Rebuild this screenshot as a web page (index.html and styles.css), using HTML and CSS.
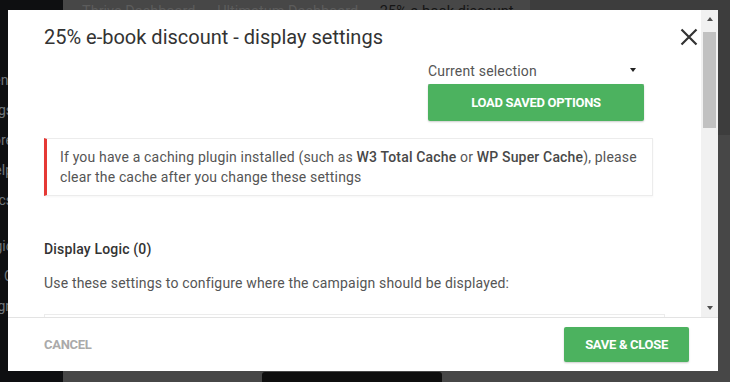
FILE: index.html
```html
<!DOCTYPE html>
<html lang="en">
<head>
    <meta charset="UTF-8">
    <meta name="viewport" content="width=device-width, initial-scale=1.0">
    <title>Display settings</title>
    <link rel="stylesheet" href="styles.css">
</head>
<body>
    <div class="admin">
        <nav class="sidebar">
            <ul class="menu">
                <li><span>Content</span></li>
                <li><span>Settings</span></li>
                <li><span>Store</span></li>
                <li><span>Help</span></li>
                <li><span>Topics</span></li>
                <li class="gap"><span>Logic</span></li>
                <li><span>Leads C</span></li>
                <li><span>Design</span></li>
            </ul>
        </nav>

        <main class="page">
            <div class="page-main">
                <div class="breadcrumbs">
                    <a href="#">Thrive Dashboard</a>
                    <span class="sep">&rarr;</span>
                    <a href="#">Ultimatum Dashboard</a>
                    <span class="sep">&rarr;</span>
                    <span class="current">25% e-book discount</span>
                </div>
                <div class="page-bottom">
                    <span class="dark-btn"></span>
                </div>
            </div>
            <aside class="page-side"></aside>
        </main>
    </div>

    <div class="modal">
        <div class="modal-body">
            <div class="modal-scroll">
                <h2 class="modal-title">25% e-book discount - display settings</h2>

                <div class="saved-options">
                    <div class="select">
                        <span>Current selection</span>
                        <span class="caret"></span>
                    </div>
                    <button class="btn btn-green btn-block">Load saved options</button>
                </div>

                <div class="notice">
                    If you have a caching plugin installed (such as <strong>W3 Total Cache</strong> or <strong>WP Super Cache</strong>), please clear the cache after you change these settings
                </div>

                <h4 class="section-title">Display Logic (0)</h4>
                <p class="section-text">Use these settings to configure where the campaign should be displayed:</p>

                <div class="rules"></div>
            </div>

            <!-- fake scrollbar, same look as the classic one -->
            <div class="scrollbar">
                <span class="arrow up"></span>
                <span class="thumb"></span>
                <span class="arrow down"></span>
            </div>
        </div>

        <div class="modal-footer">
            <a href="#" class="link-cancel">Cancel</a>
            <button class="btn btn-green">Save &amp; Close</button>
        </div>

        <button class="modal-close" aria-label="Close">
            <svg width="18" height="18" viewBox="0 0 18 18">
                <path d="M1.5 1.5 L16.5 16.5 M16.5 1.5 L1.5 16.5" stroke="#333" stroke-width="2.2" fill="none"/>
            </svg>
        </button>
    </div>
</body>
</html>
```

FILE: styles.css
```css
* {
    margin: 0;
    padding: 0;
    box-sizing: border-box;
}

body {
    font-family: Roboto, 'Liberation Sans', Arial, sans-serif;
    background: #474747;
    height: 100vh;
    overflow: hidden;
}

/* dimmed admin page behind the modal */
.admin {
    display: grid;
    grid-template-columns: 63px 1fr;
    height: 100vh;
}

.sidebar {
    background: #0e0f11;
    overflow: hidden;
}

.menu {
    list-style: none;
    padding-top: 70px;
}

.menu li {
    display: flex;
    justify-content: flex-end;
    width: 13px;
    height: 30px;
    line-height: 20px;
    font-size: 14px;
    color: #6f757a;
    white-space: nowrap;
}

.menu li.gap {
    margin-top: 16px;
}

.page {
    display: grid;
    grid-template-columns: 1fr 200px;
}

.page-main {
    display: flex;
    flex-direction: column;
}

.breadcrumbs {
    padding: 3px 0 0 19px;
    font-size: 14.5px;
    line-height: 18px;
    color: #5c5c5c;
    white-space: nowrap;
}

.breadcrumbs a {
    color: #5c5c5c;
    text-decoration: none;
}

.breadcrumbs .current {
    color: #151515;
}

.page-bottom {
    margin-top: auto;
    padding-left: 199px;
}

.dark-btn {
    display: block;
    width: 180px;
    height: 10px;
    background: #0f0f0f;
    border-radius: 3px 3px 0 0;
}

.page-side {
    background: #3d3d3d;
    height: 135px;
}

/* modal */
.modal {
    position: absolute;
    top: 10px;
    left: 8px;
    width: 710px;
    height: 361px;
    background: #fff;
    display: flex;
    flex-direction: column;
}

.modal-body {
    display: flex;
    height: 307px;
}

.modal-scroll {
    flex: 1;
    overflow: hidden;
    padding: 15px 36px 0 36px;
}

.modal-title {
    font-size: 20px;
    line-height: 24px;
    font-weight: 400;
    color: #333;
}

.modal-close {
    position: absolute;
    top: 18px;
    right: 20px;
    width: 18px;
    height: 18px;
    border: none;
    background: none;
    cursor: pointer;
}

.modal-close svg {
    display: block;
}

.saved-options {
    width: 216px;
    margin: 12px 21px 0 auto;
}

.select {
    display: flex;
    justify-content: space-between;
    align-items: flex-start;
    height: 24px;
    padding-right: 8px;
    border-bottom: 1px solid #ccc;
    font-size: 14px;
    line-height: 20px;
    letter-spacing: 0.17px;
    color: #555;
}

.caret {
    margin-top: 7px;
    border-left: 3px solid transparent;
    border-right: 3px solid transparent;
    border-top: 4px solid #222;
}

.btn {
    height: 35px;
    padding: 0 21px;
    border: none;
    border-radius: 2px;
    font-family: inherit;
    font-size: 13px;
    font-weight: 700;
    letter-spacing: -0.3px;
    text-transform: uppercase;
    color: #fff;
    cursor: pointer;
}

.btn-green {
    background: #4cb25f;
    box-shadow: 0 1px 2px rgba(0,0,0,0.2);
}

.btn-block {
    display: block;
    width: 100%;
    height: 37px;
    margin-top: -1px;
}

.notice {
    margin: 17px 12px 0 0;
    padding: 8px 13px;
    border: 1px solid #ececec;
    border-left: 3px solid #e53935;
    box-shadow: 0 1px 2px rgba(0,0,0,0.04);
    font-size: 14px;
    line-height: 20px;
    letter-spacing: 0.17px;
    color: #555;
}

.notice strong {
    font-weight: 500;
    color: #484848;
}

.section-title {
    margin-top: 43px;
    font-size: 14px;
    line-height: 20px;
    letter-spacing: 0.17px;
    font-weight: 500;
    color: #333;
}

.section-text {
    margin-top: 14px;
    font-size: 14px;
    line-height: 20px;
    letter-spacing: 0.17px;
    color: #555;
}

.rules {
    margin-top: 21px;
    height: 200px;
    border: 1px solid #ececec;
}

.scrollbar {
    width: 17px;
    background: #f1f1f1;
    display: flex;
    flex-direction: column;
    align-items: center;
}

.thumb {
    width: 13px;
    height: 96px;
    margin-top: 11px;
    background: #c1c1c1;
}

.arrow {
    border-left: 3.5px solid transparent;
    border-right: 3.5px solid transparent;
}

.arrow.up {
    margin-top: 7px;
    border-bottom: 4px solid #505050;
}

.arrow.down {
    margin-top: auto;
    margin-bottom: 7px;
    border-top: 4px solid #505050;
}

.modal-footer {
    flex: 1;
    display: flex;
    align-items: center;
    justify-content: space-between;
    padding: 0 29px 0 36px;
    border-top: 1px solid #e3e3e3;
}

.link-cancel {
    font-size: 13px;
    font-weight: 700;
    letter-spacing: -0.3px;
    text-transform: uppercase;
    text-decoration: none;
    color: #aaa;
}
```
